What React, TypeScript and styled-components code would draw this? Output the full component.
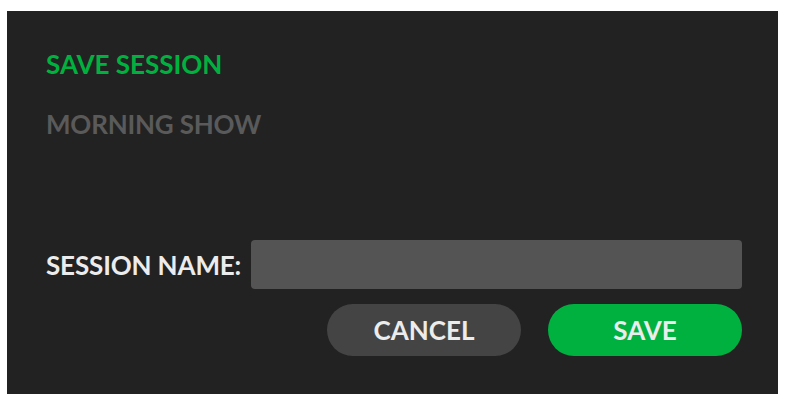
import React from "react";
import styled, { createGlobalStyle } from "styled-components";

const Global = createGlobalStyle`
  html, body { margin: 0; padding: 0; background: #ffffff; }
  body { font-family: Lato, "Open Sans", sans-serif; }
`;

const Page = styled.div`
  padding: 11px 0 0 7px;
`;

const Panel = styled.div`
  box-sizing: border-box;
  width: 771px;
  height: 383px;
  background: #222222;
  display: flex;
  flex-direction: column;
  padding: 39px 36px 38px 39px;
`;

const Title = styled.div`
  font-family: Lato, sans-serif;
  font-weight: 700;
  font-size: 26px;
  line-height: 28px;
  color: #00b140;
  text-transform: uppercase;
`;

const Subtitle = styled.div`
  margin-top: 32px;
  font-family: Lato, sans-serif;
  font-weight: 700;
  font-size: 26px;
  line-height: 28px;
  letter-spacing: -0.2px;
  color: #5a5a5a;
`;

const Spacer = styled.div`
  flex: 1;
`;

const FormRow = styled.div`
  display: flex;
  align-items: center;
  gap: 10px;
`;

const Label = styled.label`
  font-family: Lato, sans-serif;
  font-weight: 700;
  font-size: 26px;
  line-height: 28px;
  letter-spacing: -0.15px;
  color: #ececec;
  white-space: nowrap;
`;

const Input = styled.input`
  flex: 1;
  height: 49px;
  box-sizing: border-box;
  border: none;
  border-radius: 4px;
  background: #545454;
  outline: none;
  padding: 0 12px;
  color: #fff;
  font-family: Lato, sans-serif;
  font-size: 20px;
`;

const ButtonRow = styled.div`
  display: flex;
  justify-content: flex-end;
  gap: 27px;
  margin-top: 15px;
`;

const Button = styled.button<{ $primary?: boolean }>`
  width: 194px;
  height: 52px;
  border: none;
  border-radius: 26px;
  background: ${(p) => (p.$primary ? "#00b140" : "#444444")};
  color: #ececec;
  font-family: Lato, sans-serif;
  font-weight: 700;
  font-size: 26px;
  padding: 0;
  cursor: pointer;
`;

export default function App() {
  return (
    <>
      <Global />
      <Page>
        <Panel>
          <Title>Save Session</Title>
          <Subtitle>MORNING SHOW</Subtitle>
          <Spacer />
          <FormRow>
            <Label htmlFor="session-name">SESSION NAME:</Label>
            <Input id="session-name" type="text" />
          </FormRow>
          <ButtonRow>
            <Button>CANCEL</Button>
            <Button $primary>SAVE</Button>
          </ButtonRow>
        </Panel>
      </Page>
    </>
  );
}
